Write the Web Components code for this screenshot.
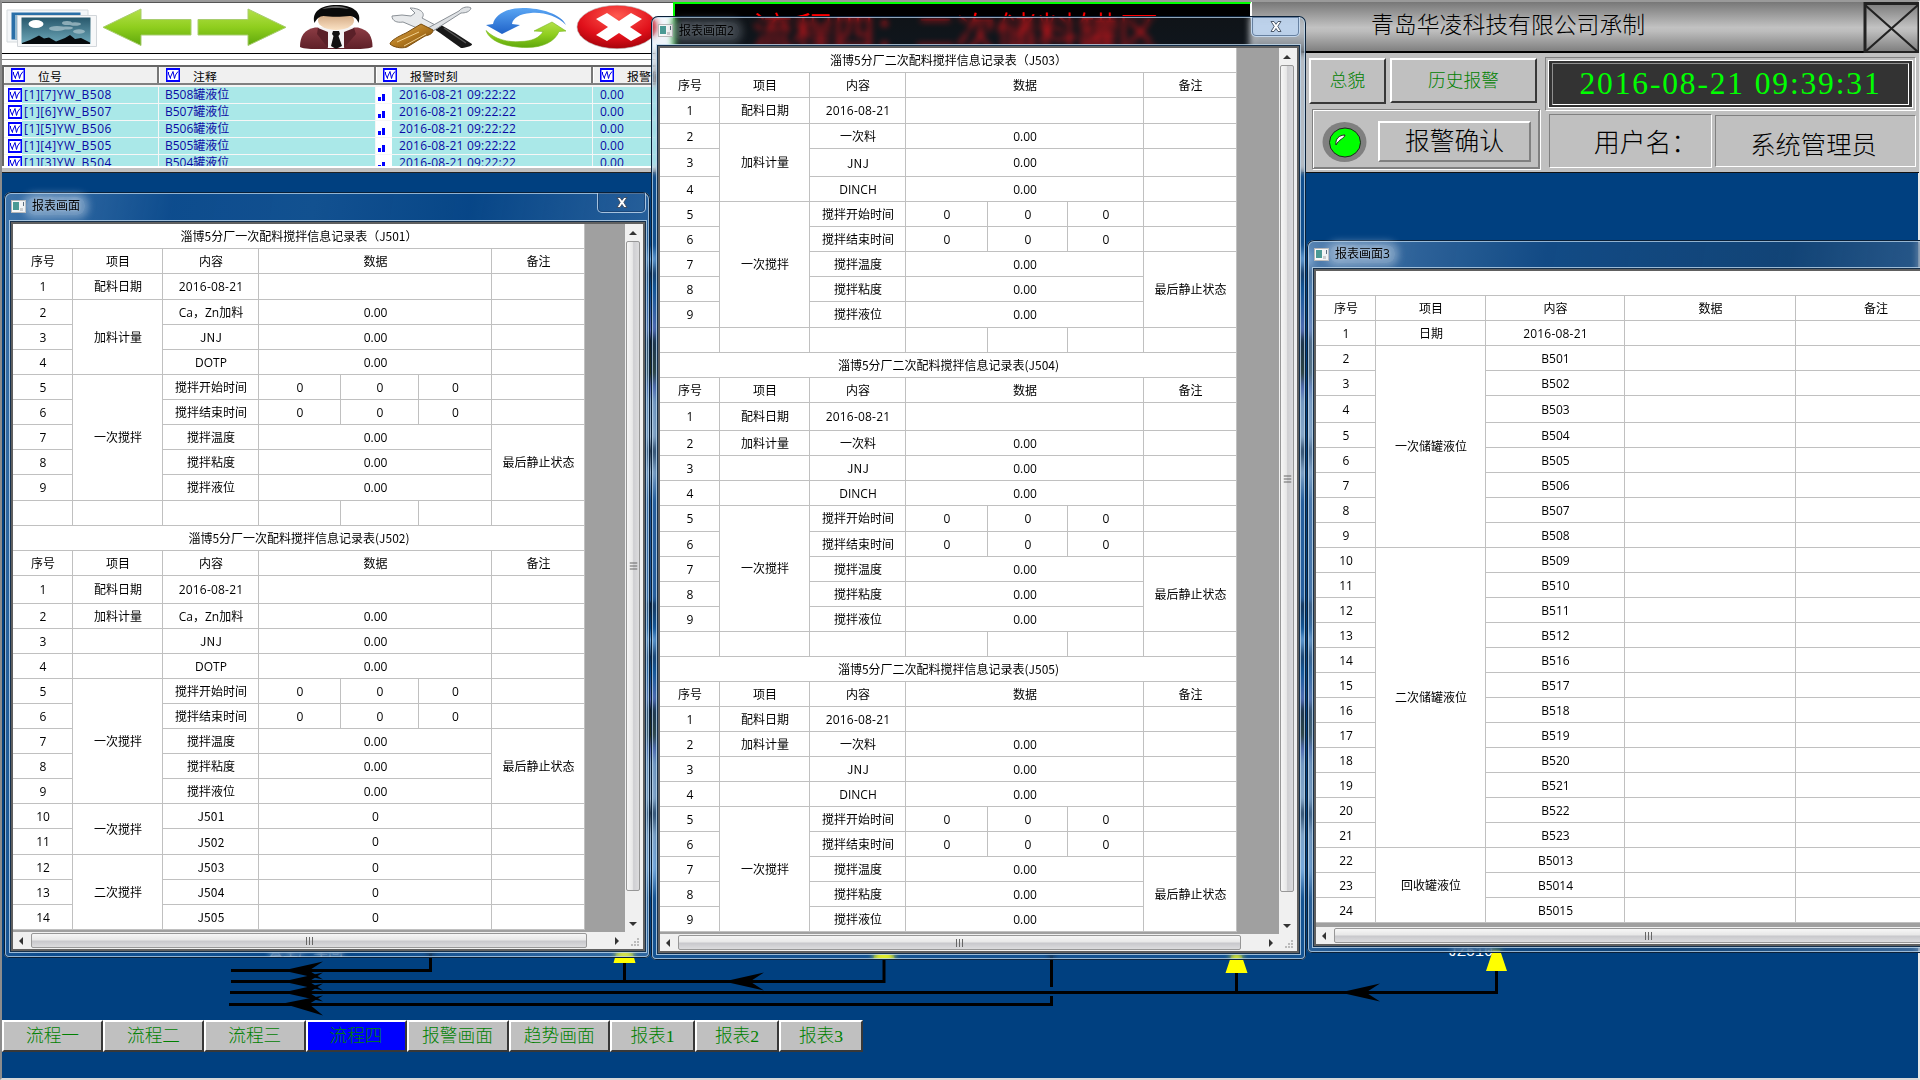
<!DOCTYPE html>
<html lang="zh-CN">
<head>
<meta charset="utf-8">
<title>流程四</title>
<style>
html,body{margin:0;padding:0;width:1920px;height:1080px;overflow:hidden;background:#004080}
body{font:12px/16px "Open Sans","Noto Sans CJK SC",sans-serif;color:#000}
</style>
</head>
<body>
<hmi-app></hmi-app>
<script>
const define = (name, css, html, init) => {
  const t = document.createElement('template');
  t.innerHTML = `<style>:host,*{box-sizing:border-box}${css}</style>${html}`;
  customElements.define(name, class extends HTMLElement {
    constructor() {
      super();
      this.attachShadow({mode: 'open'}).appendChild(t.content.cloneNode(true));
    }
    connectedCallback() { if (init && !this.ready) { this.ready = true; init(this, this.shadowRoot); } }
  });
};

/* small trend glyph used by the alarm list */
define('trend-icon', `:host{display:block;width:14px;height:14px;flex:none}svg{display:block}`,
`<svg width="14" height="14" viewBox="0 0 14 14"><rect width="14" height="14" fill="#00f"/><rect x="1.500" y="2" width="11" height="10" fill="#fff"/><path d="M2.500 4v2l2 4.500V9L7 3.500 8.500 10.500 9.500 7 12 3.500" fill="none" stroke="#0000e0" stroke-width="1"/></svg>`);

/* main toolbar */
define('tool-bar', `:host{display:block;height:50px;background:#fff;overflow:hidden}
svg{display:block}`,
`<svg width="671" height="50" viewBox="2 3 671 50">
<defs>
<linearGradient id="g" x1="0" y1="0" x2="0" y2="1"><stop offset="0" stop-color="#b4e04a"/><stop offset=".5" stop-color="#8fce1e"/><stop offset="1" stop-color="#5fa80c"/></linearGradient>
<linearGradient id="b" x1="0" y1="0" x2="0" y2="1"><stop offset="0" stop-color="#5aa6f4"/><stop offset="1" stop-color="#1f62c8"/></linearGradient>
<linearGradient id="p" x1="0" y1="0" x2="0" y2="1"><stop offset="0" stop-color="#27576b"/><stop offset="1" stop-color="#6fa9ba"/></linearGradient>
<linearGradient id="o" x1="0" y1="0" x2="1" y2="1"><stop offset="0" stop-color="#e0b060"/><stop offset=".5" stop-color="#b47a20"/><stop offset="1" stop-color="#6e430a"/></linearGradient>
<radialGradient id="r" cx=".5" cy=".25" r=".8"><stop offset="0" stop-color="#ff5a50"/><stop offset=".6" stop-color="#e0101a"/><stop offset="1" stop-color="#9c0008"/></radialGradient>
<linearGradient id="j" x1="0" y1="0" x2="0" y2="1"><stop offset="0" stop-color="#8c3c44"/><stop offset="1" stop-color="#5e2028"/></linearGradient>
<linearGradient id="f" x1="0" y1="0" x2="0" y2="1"><stop offset="0" stop-color="#c89a72"/><stop offset="1" stop-color="#fbe2c4"/></linearGradient>
</defs>
<path d="M7 10h81v32H7z" fill="#f4f6f8" stroke="#d5dadd"/><path d="M11.500 12.500h69v27h-69z" fill="#2a6fa8"/><path d="M15 15h65v24H15z" fill="#8fb6cf"/>
<path d="M17.500 15.500h79v31h-79z" fill="#f7f8f9" stroke="#d2d6da"/>
<rect x="21.500" y="17.500" width="69" height="26.500" fill="url(#p)"/>
<ellipse cx="36" cy="24" rx="7.500" ry="4" fill="#fff"/>
<g fill="#a9c3cb" opacity=".75"><ellipse cx="67" cy="23" rx="5" ry="2"/><ellipse cx="75" cy="24" rx="6" ry="1.700"/><ellipse cx="57" cy="28.500" rx="8" ry="2.500"/><ellipse cx="79" cy="31.500" rx="6" ry="2.200"/><ellipse cx="66" cy="28" rx="7" ry="1.600"/></g>
<path d="M22 43l8-3 9-4.500 5 3 5-1 7 4 9-3.500 5-3 5 4 6-1 9 4.500V44H22z" fill="#060a0d"/>
<path d="M103 27.300L141 9v10.500h50v15.500h-50v10.500z" fill="url(#g)" stroke="#a8cc70"/>
<path d="M286 27.300L248 9v10.500h-50v15.500h50v10.500z" fill="url(#g)" stroke="#a8cc70"/>
<path d="M300 47c0-11 4-17 15-19.500h43c11 2.500 14.500 9 14.500 19.500-5 2-13 2-20 2h-33c-8 0-15 0-19.500-2z" fill="url(#j)"/>
<path d="M318 27h36l-10 21h-16z" fill="#f4f4f4"/><path d="M328 32l-10-4-1 6 11 14zM344 32l10-4 2 6-12 14z" fill="#5a2028"/>
<path d="M333 31h6l1 3-1.500 2L342 46l-6 3-5-3 2.500-10-1.500-2z" fill="#111"/>
<ellipse cx="336" cy="20.500" rx="18" ry="9.500" fill="url(#f)"/>
<path d="M314.500 23c-3-11 6-18 22-18s26 7 22 18c-2-5-5-7-9-7-8 1-19 1-26 0-4 0-7 3-9 7z" fill="#0a0a0a"/><path d="M322 9c8-4 20-4 27 0-7-1.500-20-1.500-27 0z" fill="#666"/>
<path d="M441 25l14 8 17 11c1 2-8 4-11 4l-21-15-6-4z" fill="#191919"/><path d="M444 28l22 15" stroke="#555" stroke-width="1.500"/>
<path d="M392 16c0 5 5 7 11 6l26 11 10-6-17-9c4-5-2-10-12-10l5 5-4 3-9-1z" fill="#e8eaec" stroke="#8a9096"/>
<path d="M428 28l31-17c3-4 9-5 12-3-1 4-6 5-10 5l-28 18z" fill="#dfe2e5" stroke="#8a9096"/>
<path d="M421 24l12 6c0 4-4 5-8 6l-18 11c-6 2-14 0-17-3 0-3 9-8 16-11z" fill="url(#o)" stroke="#7a4c0c"/><path d="M397 42l22-10M404 46l22-12" stroke="#f1d08e"/>
<path d="M486 25l7-1c2-9 13-16 30-16 18 0 38 6 43 17-9-9-22-13-35-12-12 1-18 5-19 11l8 1-18 9z" fill="url(#b)"/>
<path d="M566 31l-7 .5c-4 10-16 16-32 16-18 0-37-5-41-17 9 9 22 12 34 11 12 0 20-4 23-10l-9-.500 18-9z" fill="url(#g)" stroke="#73b51c" stroke-width=".6"/>
<ellipse cx="617" cy="27" rx="40" ry="21.700" fill="url(#r)" stroke="#b8b8b8" stroke-width=".6"/>
<path d="M607 13l12 8 12-8 11 6-12 8 12 8-11 6-12-8-12 8-11-6 12-8-12-8z" fill="#fff"/>
</svg>`);

/* alarm list */
define('alarm-list', `:host{display:block;height:120px;background:#fff;border-top:1px solid #000;overflow:hidden}
.gap{height:11px;background:linear-gradient(#fff 5px,#888 5px,#888 6px,#fff 6px)}
.head,.row{display:grid;grid-template-columns:155px 217px 217px 1fr}
.list{border-top:2px solid #666;border-left:2px solid #666;height:101px;overflow:hidden;width:669px;background:#f4f4f4}
.head{height:18px;background:#f0f0f0;border-bottom:2px solid #808080}
.head div{display:flex;align-items:center;gap:13px;padding:0 0 0 6px;border-right:2px solid #777;border-left:1px solid #fff;overflow:hidden;white-space:nowrap;font-size:11.900px}
.head span{position:relative;top:1px}
.rows{padding-top:2px}
.row{height:17px;border-bottom:1px solid #f6f6f6;color:#0a0aa4}
.row div{display:flex;align-items:center;background:#aae8e8;border-right:1px solid #f6f6f6;white-space:nowrap;height:16px}
.row .c1{padding-left:4px;background:linear-gradient(90deg,#fff 18px,#aae8e8 18px);gap:2px}
.c1 span{letter-spacing:.55px}
.row .c2{padding-left:6px}
.row .c3{background:linear-gradient(90deg,#fff 16px,#aae8e8 16px);gap:13px;padding-left:2px;letter-spacing:.2px}
.row .c4{padding-left:7px}
svg{display:block;flex:none;position:relative;top:2px}
.end{height:7px;background:#c0c0c0;border-top:2px solid #fff;border-bottom:1px solid #222}`,
`<div class="gap"></div><div class="list"><div class="head"></div><div class="rows"></div></div><div class="end"></div>`,
(el, r) => {
  r.querySelector('.head').innerHTML = ['位号','注释','报警时刻','报警值'].map(t => `<div><trend-icon></trend-icon><span>${t}</span></div>`).join('');
  r.querySelector('.rows').innerHTML = [[7,508],[6,507],[5,506],[4,505],[3,504]].map(([i,n]) =>
   `<div class="row"><div class="c1"><trend-icon></trend-icon><span>[1][${i}]YW_B${n}</span></div><div class="c2"><span>B${n}罐液位</span></div><div class="c3"><svg width="8" height="9"><path d="M0 4h3v4H0zM4 1h3v7H4z" fill="#00f"/></svg><span>2016-08-21 09:22:22</span></div><div class="c4">0.00</div></div>`).join('');
});

/* raised push button */
define('push-button', `:host{display:flex;align-items:center;justify-content:center;background:#c0c0c0;border:2px solid;border-color:#fff var(--edge,#383838) var(--edge,#383838) #fff;white-space:nowrap;color:#008000;font:17.700px/20px "Liberation Serif","Noto Sans CJK SC",serif;font-weight:300}
:host([active]){background:#00f}`, `<slot></slot>`);

/* right-hand control panel */
define('control-panel', `:host{display:flex;flex-direction:column;background:#c0c0c0;height:171px;border-bottom:1px solid #111;border-left:1px solid #fff;font-family:"Liberation Serif","Noto Sans CJK SC",serif;font-weight:300}
.bar{height:51px;display:flex;justify-content:space-between;background:linear-gradient(#777,#c2c2c2 52%,#bcbcbc 60%,#808080);border-bottom:2px solid #000;flex:none}
.maker{font-size:22.850px;line-height:48px;padding-left:119px}
.bar svg{display:block}
.body{flex:1;display:flex;padding:5px 3px 0 57px;gap:5px}
.left{width:231px;display:flex;flex-direction:column;gap:5px}
.btns{display:flex;gap:4px;align-items:flex-start}
.b1{width:77px;height:46px}.b2{width:147px;height:45px}
.ack{width:228px;height:60px;margin-left:3px;border:1px solid #808080;box-shadow:inset 1px 1px #fff,inset -1px -1px #808080,1px 1px #fff;display:flex;align-items:center;padding:5px 0 0 9px;gap:11px}
.ack svg{flex:none}
.b3{width:153px;height:41px;font-size:24.700px;color:#000;--edge:#808080}
.right{flex:1;display:flex;flex-direction:column;gap:3px;margin-top:-1px}
.clock{height:54px;border:1px solid;border-color:#808080 #fff #fff #808080;padding:2px}
.face{height:48px;background:#333;border:1px solid #fff;padding:2px 3px}
.in{height:42px;border:1px solid;border-color:#909090 #fff #fff #909090;color:#0f0;display:flex;align-items:center;justify-content:center;font-size:31.500px;line-height:40px;letter-spacing:1.850px;white-space:nowrap}
.user{display:flex;gap:3px;align-items:flex-start;padding-left:4px}
.user div{border:1px solid;border-color:#808080 #fff #fff #808080;display:flex;align-items:center;justify-content:center;white-space:nowrap}
.u1{width:163px;height:54px;font-size:25.800px;padding:6px 0 0 30px}
.u2{width:201px;height:52px;margin-top:1px;font-size:25.300px;padding:8px 4px 0 0}`,
`<div class="bar"><span class="maker">青岛华凌科技有限公司承制</span><svg width="56" height="51"><rect x="2" y="1.500" width="54" height="49" fill="none" stroke="#222" stroke-width="3"/><path d="M2 3l53 47M55 3L2 50" stroke="#222" stroke-width="2.200"/></svg></div>
<div class="body"><div class="left"><div class="btns"><push-button class="b1">总貌</push-button><push-button class="b2">历史报警</push-button></div>
<div class="ack"><svg width="45" height="42"><ellipse cx="22.500" cy="21" rx="22" ry="20" fill="#808080"/><ellipse cx="23" cy="21.500" rx="15.500" ry="14.500" fill="#0f0" stroke="#222"/><path d="M14 24c-1-6 3-10 9-10-1 4-6 4-9 10z" fill="#fff" stroke="#222"/></svg><push-button class="b3">报警确认</push-button></div></div>
<div class="right"><div class="clock"><div class="face"><div class="in">2016-08-21 09:39:31</div></div></div>
<div class="user"><div class="u1">用户名：</div><div class="u2">系统管理员</div></div></div></div>`);

/* process title board */
define('title-board', `:host{display:block;background:#000;border:2px solid #0f0;border-bottom:0;border-right:1px solid #fff;color:#f00;font:40.600px/44px "Noto Sans CJK SC",sans-serif;font-weight:300;letter-spacing:.1px;white-space:nowrap;padding:4px 0 0 77px}`, `<slot></slot>`);

/* pipes and equipment behind the report windows */
define('flow-canvas', `:host{display:block;position:absolute;left:0;top:173px;pointer-events:none}svg{display:block}text{font:15px "Liberation Mono",monospace;fill:#fff}.cn{font-family:"Noto Sans CJK SC",sans-serif}`,
`<svg width="1918" height="845" viewBox="0 173 1918 845">
<defs><linearGradient id="s" x1="0" x2="0" y1="245" y2="955" gradientUnits="userSpaceOnUse">
<stop offset="0" stop-color="#004080"/><stop offset=".02" stop-color="#6aa4dc"/><stop offset=".04" stop-color="#0a2c54"/><stop offset=".06" stop-color="#00488c"/><stop offset=".12" stop-color="#5566b0"/><stop offset=".135" stop-color="#101c28"/><stop offset=".18" stop-color="#26321c"/><stop offset=".2" stop-color="#5566b0"/><stop offset=".22" stop-color="#86a4c4"/><stop offset=".27" stop-color="#9cb4cc"/><stop offset=".29" stop-color="#2a3e54"/><stop offset=".32" stop-color="#94b0cc"/><stop offset=".36" stop-color="#1c5494"/><stop offset=".5" stop-color="#1c5494"/><stop offset=".505" stop-color="#061c38"/><stop offset=".54" stop-color="#00488c"/><stop offset=".556" stop-color="#6aa4dc"/><stop offset=".58" stop-color="#0a2c54"/><stop offset=".6" stop-color="#00488c"/><stop offset=".64" stop-color="#5566b0"/><stop offset=".655" stop-color="#101c28"/><stop offset=".69" stop-color="#26321c"/><stop offset=".71" stop-color="#5566b0"/><stop offset=".73" stop-color="#86a4c4"/><stop offset=".78" stop-color="#9cb4cc"/><stop offset=".8" stop-color="#2a3e54"/><stop offset=".83" stop-color="#94b0cc"/><stop offset=".88" stop-color="#88b8e8"/><stop offset=".92" stop-color="#004080"/></linearGradient>
<path id="a" d="M0 0L40-9 26 0 40 9z"/></defs>
<rect x="646" y="245" width="12" height="700" fill="url(#s)"/><rect x="1296" y="245" width="9" height="700" fill="url(#s)"/><rect x="1308" y="245" width="5" height="700" fill="url(#s)"/>
<g fill="none" stroke="#000" stroke-width="3"><path d="M231 970.500H430.500V930"/><path d="M231 981.500H884V940M624.500 981V955"/><path d="M230 992.500H1496.500V965M1236.500 992V965"/><path d="M229 1004.500H1051.500V996M1051.500 987V940"/></g>
<use href="#a" x="283" y="970.500"/><use href="#a" x="283" y="981.500"/><use href="#a" x="283" y="992.500"/><path d="M283 1003.500l40-8-14 8.500 14 11.500z"/><use href="#a" x="724" y="981.500"/><use href="#a" x="1340" y="992.500"/>
<path d="M613.500 963l6-22h10l6 22zM873 960l6-22h10l6 22zM1225.500 973l7-21h8l7 21zM1486 971l7-21h7l7 21z" fill="#ff0"/>
<text x="1448" y="956">JZ510</text><text class="cn" x="268" y="956">去生产车间</text>
</svg>`);

/* scrollbar, direction given by the "dir" attribute */
define('scroll-bar', `:host{display:flex;background:#f0f0f0;justify-content:space-between;align-items:center}
:host([dir=v]){flex-direction:column;width:18px;padding-right:2px}
:host([dir=h]){height:17px}
.a{flex:none;display:flex;align-items:center;justify-content:center;width:17px;height:17px}
:host([dir=h]) .a:first-of-type{padding-right:3px}
.t{display:flex;align-items:center;justify-content:center;flex:none;border:1px solid #979797;border-radius:2px}
:host([dir=v]) .t{width:14px;background:linear-gradient(90deg,#f6f6f6,#e8e8e8 45%,#cfcfd2 55%,#dcdcde)}
:host([dir=h]) .t{height:15px;background:linear-gradient(#f6f6f6,#e8e8e8 45%,#c8c8cc 55%,#dcdcde)}
.s{flex:1}svg{display:block}
:host([dir=v]) .a svg{transform:rotate(90deg)}:host([dir=v]) .t svg{transform:rotate(90deg)}
:host([dir=v]) .a:first-of-type svg{transform:rotate(90deg)}`,
`<div class="a"><svg width="8" height="8"><path d="M6 0v8L2 4z" fill="#333"/></svg></div><div class="t"><svg width="9" height="8"><path d="M1.500 0v8M4.500 0v8M7.500 0v8" stroke="#666"/></svg></div><div class="s"></div><div class="a"><svg width="8" height="8"><path d="M2 0v8l4-4z" fill="#333"/></svg></div>`,
(el, r) => {
  const v = el.getAttribute('dir') === 'v';
  r.querySelector('.t').style[v ? 'height' : 'width'] = el.getAttribute('thumb') + 'px';
  if (el.hasAttribute('lead')) r.querySelector('.a').style[v ? 'height' : 'width'] = el.getAttribute('lead') + 'px';
});

/* glass window */
define('aero-window', `:host{position:absolute;display:flex;flex-direction:column;padding:0 var(--pr,7px) var(--pb,9px) 9px;border-radius:7px 7px 5px 5px;background:var(--tint,linear-gradient(100deg,rgba(150,190,230,.42),rgba(60,120,190,.22) 22%,rgba(90,150,210,.2) 40%,rgba(40,100,170,.18) 60%,rgba(130,170,215,.36) 90%));backdrop-filter:blur(3px);box-shadow:inset 0 0 0 1px #0a2038,inset 0 0 0 2px rgba(190,215,235,.75)}
header{height:var(--th,32px);flex:none;display:flex;justify-content:space-between}
.cap{display:flex;align-items:center;gap:6px;padding-top:var(--tp,0);margin-left:var(--tl,-2px);margin-top:-2px;height:32px}
.cap span{font-size:12px;line-height:18px;padding:0 5px;margin-left:-5px;border-radius:8px;background:var(--halo,rgba(205,220,236,.4));box-shadow:0 0 7px 4px var(--halo,rgba(205,220,236,.4));text-shadow:0 0 5px var(--glow,#dfe8f2)}
.cap svg{flex:none}
.x{width:49px;height:20px;margin-top:1px;margin-right:-3px;border:1px solid rgba(200,220,240,.8);border-top:0;border-radius:0 0 5px 5px;box-shadow:inset 0 0 0 1px rgba(20,50,90,.5);display:flex;align-items:center;justify-content:center;background:var(--xb,transparent)}
.client{flex:1;min-height:0;background:#a0a0a0;box-shadow:0 0 0 2px #606060,0 0 0 3px #15304c,0 0 0 4px rgba(190,215,235,.8);overflow:hidden;display:flex;flex-direction:column}
:host([noclose]) .x{display:none}`,
`<header><div class="cap"><svg width="15" height="13"><rect x=".5" y=".5" width="14" height="12" fill="#f8f8f8" stroke="#b8b8b8"/><rect x="2" y="2" width="6" height="8" fill="#4a9a94"/><path d="M12.500 2v4" stroke="#456"/><path d="M9 8h3v3H9z" fill="#ccc"/></svg><span></span></div>
<div class="x"><svg width="12" height="11"><path d="M1 .5h3L6 3.300 8 .5h3L7.800 5.300 11 10.500H8L6 7.500l-2 3H1l3.200-5.200z" fill="#fff" stroke="#3c4a5c" stroke-width=".9"/></svg></div></header><div class="client"><slot></slot></div>`,
(el, r) => { r.querySelector('span').textContent = el.getAttribute('caption'); });

/* window body: sheet, vertical and horizontal scrollbars */
define('sheet-view', `:host{display:flex;flex-direction:column;flex:1;min-height:0}
.m{flex:1;display:flex;min-height:0}.p{flex:1;min-width:0;overflow:hidden}
.f{display:flex;height:17px;background:#f0f0f0}.f scroll-bar{flex:1;min-width:0}
.g{width:18px;flex:none}svg{display:block}`, ``,
(el, r) => {
  const a = n => el.getAttribute(n);
  r.innerHTML += `<div class="m"><div class="p"><slot></slot></div>${a('v') ? `<scroll-bar dir="v" thumb="${a('v')}"></scroll-bar>` : ''}</div><div class="f"><scroll-bar dir="h" lead="18" thumb="${a('h')}"></scroll-bar>${a('v') ? `<div class="g"><svg width="18" height="17"><path d="M12 6h2v2h-2zM9 9h2v2H9zM12 9h2v2h-2zM6 12h2v2H6zM9 12h2v2H9zM12 12h2v2h-2z" fill="#bbb"/></svg></div>` : ''}</div>`;
});

/* report sheet: cells are [text, colspan, rowspan] and flow like a table */
define('report-sheet', `:host{display:grid;width:max-content;background:#fff}
div{border:0 solid #c0c0c0;border-width:0 1px 1px 0;display:flex;align-items:center;justify-content:center;white-space:nowrap;line-height:16px;min-width:0;overflow:hidden;padding:1px 0 0 1px}
.j{font-family:"Noto Sans CJK SC",sans-serif;letter-spacing:.17px;padding-top:0}
.w{letter-spacing:0}
.d{letter-spacing:.2px}`, ``,
(el, r) => {
  const {cols, rows, cells} = SHEETS[el.getAttribute('data')];
  el.style.gridTemplateColumns = cols.map(c => c + 'px').join(' ');
  el.style.gridTemplateRows = rows.map(c => c + 'px').join(' ');
  for (const [t, c = 1, n = 1] of cells) {
    const d = document.createElement('div');
    d.textContent = t;
    if (t.includes('J')) d.className = t.length > 6 ? 'j w' : 'j';
    if (t.startsWith('2016')) d.className = 'd';
    d.style.gridColumn = 'span ' + c; d.style.gridRow = 'span ' + n;
    r.appendChild(d);
  }
});

const fill = (n, v = 25) => Array(n).fill(v);
const head = t => [[t, 7], ['序号'], ['项目'], ['内容'], ['数据', 3], ['备注']];
const blank = Array(7).fill(['']);
const block = (title, items, merged) => [
  ...head(title),
  ['1'], ['配料日期'], ['2016-08-21'], ['', 3], [''],
  ['2'], ['加料计量', 1, merged ? 3 : 1], [items[0]], ['0.00', 3], [''],
  ['3'], ...(merged ? [] : [['']]), [items[1]], ['0.00', 3], [''],
  ['4'], ...(merged ? [] : [['']]), [items[2]], ['0.00', 3], [''],
  ['5'], ['一次搅拌', 1, 5], ['搅拌开始时间'], ['0'], ['0'], ['0'], [''],
  ['6'], ['搅拌结束时间'], ['0'], ['0'], ['0'], [''],
  ['7'], ['搅拌温度'], ['0.00', 3], ['最后静止状态', 1, 3],
  ['8'], ['搅拌粘度'], ['0.00', 3],
  ['9'], ['搅拌液位'], ['0.00', 3]
];
const A = ['Ca，Zn加料', 'JNJ', 'DOTP'], B = ['一次料', 'JNJ', 'DINCH'];
const tanks = ['B501','B502','B503','B504','B505','B506','B507','B508','B509','B510','B511','B512','B516','B517','B518','B519','B520','B521','B522','B523','B5013','B5014','B5015'];
const groups = {0: ['一次储罐液位', 1, 8], 8: ['二次储罐液位', 1, 12], 20: ['回收罐液位', 1, 3]};
const SHEETS = {
  one: {cols: [60,90,96,82,78,73,93], rows: [25,25,26,...fill(7),26,...fill(3),28,...fill(9),26,...fill(3)],
    cells: [...block('淄博5分厂一次配料搅拌信息记录表（J501）', A, true), ...blank, ...block('淄博5分厂一次配料搅拌信息记录表(J502)', A, false),
      ['10'], ['一次搅拌', 1, 2], ['J501'], ['0', 3], [''], ['11'], ['J502'], ['0', 3], [''],
      ['12'], ['二次搅拌', 1, 3], ['J503'], ['0', 3], [''], ['13'], ['J504'], ['0', 3], [''], ['14'], ['J505'], ['0', 3], ['']]},
  two: {cols: [60,90,96,82,80,76,93], rows: [25,25,26,25,28,...fill(5),26,...fill(3),28,...fill(3),26,...fill(16)],
    cells: [...block('淄博5分厂二次配料搅拌信息记录表（J503）', B, true), ...blank, ...block('淄博5分厂二次配料搅拌信息记录表(J504)', B, false), ...blank, ...block('淄博5分厂二次配料搅拌信息记录表(J505)', B, false)]},
  three: {cols: [60,110,139,171,160], rows: [...fill(5),27,...fill(20)],
    cells: [['', 5], ['序号'], ['项目'], ['内容'], ['数据'], ['备注'], ['1'], ['日期'], ['2016-08-21'], [''], [''],
      ...tanks.flatMap((t, i) => [[String(i + 2)], ...(groups[i] ? [groups[i]] : []), [t], [''], ['']])]}
};

/* bottom navigation */
define('nav-bar', `:host{display:grid;grid-template-columns:101px 101px 101.500px 101px 102px 101.500px 85px 84px 84px;height:32px;width:max-content}`,
`<push-button>流程一</push-button><push-button>流程二</push-button><push-button>流程三</push-button><push-button active>流程四</push-button><push-button>报警画面</push-button><push-button>趋势画面</push-button><push-button>报表1</push-button><push-button>报表2</push-button><push-button>报表3</push-button>`);

define('hmi-app', `:host{display:flex;flex-direction:column;position:relative;width:1920px;height:1080px;background:#004080;border-left:2px solid #8c8c8c;border-right:2px solid #e8e8e8;border-bottom:2px solid #d8d8d8;border-top:2px solid #9a9a9a}
.top{display:flex;height:171px;flex:none}
.l{width:671px;flex:none;border-top:1px solid #555}
title-board{width:578px;flex:none}
control-panel{flex:1}
.work{flex:1}
nav-bar{flex:none;margin-bottom:26px}
.desk{position:absolute;left:-2px;top:-2px;width:1920px;height:1080px;overflow:hidden}
.w1{left:4px;top:192px;width:646px;height:766px}
.w2{left:651px;top:16px;width:655px;height:944px;--pr:9px;--th:32px;--tp:1px;--glow:#8c969e;--halo:rgba(140,150,158,.3);--xb:rgba(190,215,245,.8);--tint:linear-gradient(rgba(150,190,230,.1),rgba(110,160,215,.14) 40px,rgba(100,160,220,.2))}
.w3{left:1307px;top:240px;width:680px;height:713px;--th:31px;--pb:9px;--tint:linear-gradient(100deg,rgba(170,195,225,.5),rgba(140,170,205,.32) 14%,rgba(60,100,145,.3) 30%,rgba(70,80,90,.25) 60%,rgba(140,160,185,.4) 90%)}`,
`<div class="top"><div class="l"><tool-bar></tool-bar><alarm-list></alarm-list></div><title-board>流程四：二次储料罐区</title-board><control-panel></control-panel></div>
<div class="work"></div><nav-bar></nav-bar>
<div class="desk"><flow-canvas></flow-canvas>
<aero-window class="w1" caption="报表画面"><sheet-view v="650" h="556"><report-sheet data="one"></report-sheet></sheet-view></aero-window>
<aero-window class="w3" caption="报表画面3" noclose><sheet-view h="628"><report-sheet data="three"></report-sheet></sheet-view></aero-window>
<aero-window class="w2" caption="报表画面2"><sheet-view v="827" h="563"><report-sheet data="two"></report-sheet></sheet-view></aero-window></div>`);
</script>
</body>
</html>
